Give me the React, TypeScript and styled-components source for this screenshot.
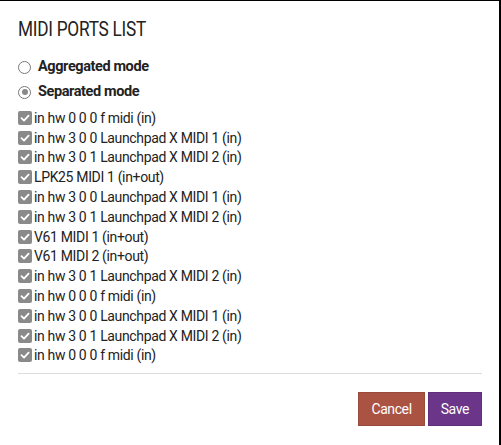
import React from "react";
import styled, { createGlobalStyle } from "styled-components";

const Global = createGlobalStyle`
  html, body { margin: 0; padding: 0; background: #fff; }
  body { font-family: Roboto, "Liberation Sans", sans-serif; color: #222; }
`;

const Frame = styled.div`
  width: 501px;
  height: 445px;
  box-sizing: border-box;
  border-top: 1px solid #000;
  border-right: 2px solid #000;
  background: #fff;
  padding: 0 17px 0 18px;
  display: flex;
  flex-direction: column;
`;

const Title = styled.h1`
  margin: 16px 0 0 0;
  font-size: 21px;
  font-weight: 400;
  line-height: 24px;
  color: #222;
  letter-spacing: -0.3px;
  transform: scaleX(0.82);
  transform-origin: left center;
`;

const RadioGroup = styled.div`
  margin-top: 17px;
  display: flex;
  flex-direction: column;
  gap: 7px;
`;

const RadioRow = styled.label`
  display: flex;
  align-items: center;
  gap: 7px;
  font-size: 14.5px;
  font-weight: 700;
  line-height: 18px;
  letter-spacing: -0.4px;
  color: #222;
`;

const RadioCircle = styled.span<{ $checked?: boolean }>`
  width: 13px;
  height: 13px;
  box-sizing: border-box;
  border-radius: 50%;
  border: 1.5px solid #777;
  display: flex;
  align-items: center;
  justify-content: center;
  &::after {
    content: "";
    width: 6px;
    height: 6px;
    border-radius: 50%;
    background: ${(p) => (p.$checked ? "#888" : "transparent")};
  }
`;

const List = styled.div`
  margin-top: 7px;
  display: flex;
  flex-direction: column;
`;

const CheckRow = styled.label`
  display: flex;
  align-items: center;
  gap: 2px;
  height: 19.8px;
  font-size: 14px;
  letter-spacing: -0.35px;
  color: #222;
`;

const Box = styled.span`
  width: 14px;
  height: 14px;
  border-radius: 2px;
  background: #8a8a8a;
  display: flex;
  align-items: center;
  justify-content: center;
  flex-shrink: 0;
`;

const Divider = styled.hr`
  margin: 8px 0 0 0;
  border: none;
  border-top: 1px solid #ddd;
`;

const Footer = styled.div`
  display: flex;
  justify-content: flex-end;
  gap: 3px;
  margin-top: 18px;
`;

const Button = styled.button<{ $bg: string }>`
  height: 34px;
  padding: 0 12px;
  border: 1px solid rgba(0, 0, 0, 0.1);
  background: ${(p) => p.$bg};
  color: #fff;
  font-family: Roboto, "Liberation Sans", sans-serif;
  font-size: 14px;
  letter-spacing: -0.4px;
  cursor: pointer;
`;

const ports = [
  "in hw 0 0 0 f midi (in)",
  "in hw 3 0 0 Launchpad X MIDI 1 (in)",
  "in hw 3 0 1 Launchpad X MIDI 2 (in)",
  "LPK25 MIDI 1 (in+out)",
  "in hw 3 0 0 Launchpad X MIDI 1 (in)",
  "in hw 3 0 1 Launchpad X MIDI 2 (in)",
  "V61 MIDI 1 (in+out)",
  "V61 MIDI 2 (in+out)",
  "in hw 3 0 1 Launchpad X MIDI 2 (in)",
  "in hw 0 0 0 f midi (in)",
  "in hw 3 0 0 Launchpad X MIDI 1 (in)",
  "in hw 3 0 1 Launchpad X MIDI 2 (in)",
  "in hw 0 0 0 f midi (in)",
];

const Check = () => (
  <svg width="10" height="10" viewBox="0 0 10 10">
    <path d="M1.5 5.2 L4 7.6 L8.6 2.6" fill="none" stroke="#fff" strokeWidth="1.8" strokeLinecap="round" strokeLinejoin="round" />
  </svg>
);

export default function App() {
  return (
    <>
      <Global />
      <Frame>
        <Title>MIDI PORTS LIST</Title>
        <RadioGroup>
          <RadioRow>
            <RadioCircle />
            Aggregated mode
          </RadioRow>
          <RadioRow>
            <RadioCircle $checked />
            Separated mode
          </RadioRow>
        </RadioGroup>
        <List>
          {ports.map((p, i) => (
            <CheckRow key={i}>
              <Box>
                <Check />
              </Box>
              {p}
            </CheckRow>
          ))}
        </List>
        <Divider />
        <Footer>
          <Button $bg="#ab5343">Cancel</Button>
          <Button $bg="#6b3589">Save</Button>
        </Footer>
      </Frame>
    </>
  );
}
